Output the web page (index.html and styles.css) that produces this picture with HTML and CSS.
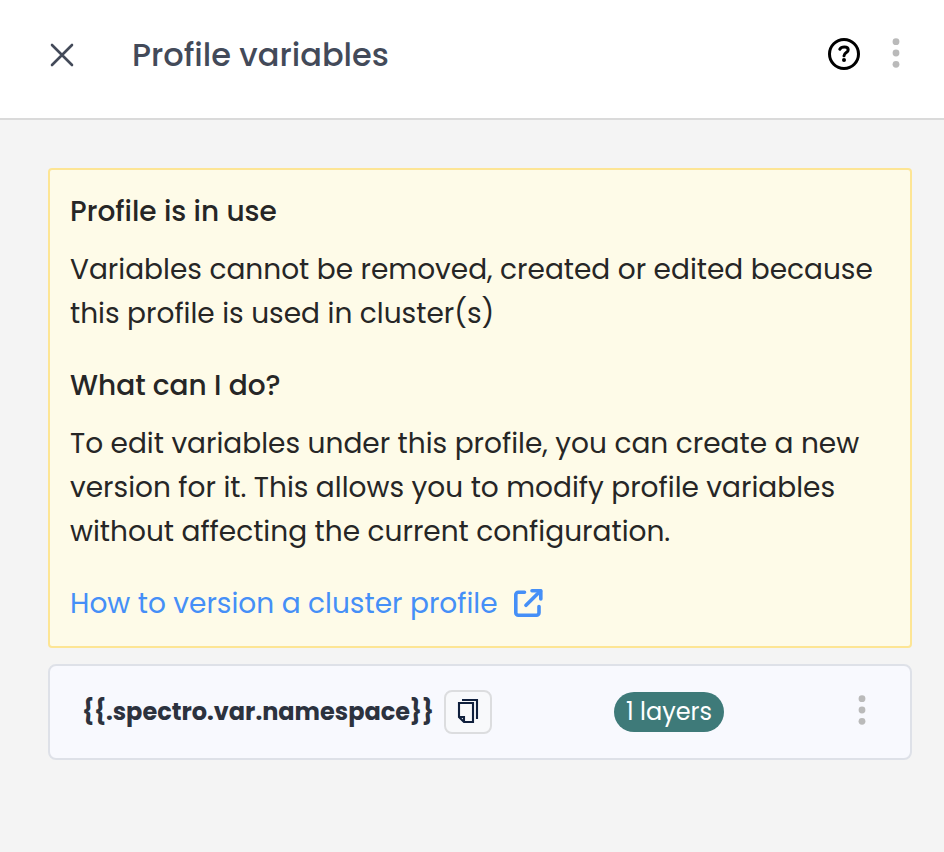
FILE: index.html
```html
<!DOCTYPE html>
<html lang="en">
<head>
<meta charset="utf-8">
<meta name="viewport" content="width=device-width, initial-scale=1">
<title>Profile variables</title>
<link rel="stylesheet" href="styles.css">
</head>
<body>
<header class="header">
  <button class="icon-button" type="button" aria-label="Close">
    <svg width="24" height="24" viewBox="0 0 24 24" fill="none" stroke="#434a59" stroke-width="2.6" stroke-linecap="round"><path d="M2 2l20 20M22 2L2 22"/></svg>
  </button>
  <h1 class="title">Profile variables</h1>
  <button class="icon-button help" type="button" aria-label="Help">
    <svg width="34" height="34" viewBox="0 1 34 34" fill="none" stroke="#000" stroke-width="3"><circle cx="17" cy="17" r="14.5"/><path d="M12.8 12.2C14.2 9.6 21 9 21.2 12.8C21.3 15.6 17.2 15.4 17 18.8" stroke-linecap="round"/><circle cx="17" cy="23" r="2" fill="#000" stroke="none"/></svg>
  </button>
  <button class="icon-button" type="button" aria-label="More actions">
    <svg width="8" height="34" viewBox="0 0 8 34" fill="#bababa"><circle cx="4" cy="3.7" r="3.4"/><circle cx="4" cy="15" r="3.4"/><circle cx="4" cy="26.3" r="3.4"/></svg>
  </button>
</header>
<main class="content">
  <section class="notice">
    <h2 class="notice-heading">Profile is in use</h2>
    <p class="notice-text">Variables cannot be removed, created or edited because this profile is used in cluster(s)</p>
    <h2 class="notice-heading">What can I do?</h2>
    <p class="notice-text">To edit variables under this profile, you can create a new version for it. This allows you to modify profile variables without affecting the current configuration.</p>
    <a class="notice-link" href="#versioning">How to version a cluster profile
      <svg width="30" height="30" viewBox="1 1 30 30" fill="none" stroke="#458ff7" stroke-width="3.6" stroke-linecap="round" stroke-linejoin="round"><path d="M11.500 4.200H5.300A2.500 2.500 0 0 0 2.800 6.700V24.700A2.500 2.500 0 0 0 5.300 27.200H23.500A2.500 2.500 0 0 0 26 24.700V18.500"/><path d="M13 17.300L27.400 2.900"/><path d="M19 2.800H27.800V11"/></svg>
    </a>
  </section>
  <section class="variable">
    <div class="variable-name">
      <span class="name">{{.spectro.var.namespace}}</span>
      <button class="copy" type="button" aria-label="Copy variable">
        <svg width="24" height="28" viewBox="0 1 24 28" fill="none" stroke="#10203d" stroke-width="2.1"><path d="M6 3H21V22"/><path d="M3 6H17V25H8L3 20Z"/><path d="M3 20H8V25"/></svg>
      </button>
    </div>
    <div class="variable-meta">
      <span class="badge">1 layers</span>
      <button class="icon-button" type="button" aria-label="Variable actions">
        <svg width="8" height="34" viewBox="0 0 8 34" fill="#bababa"><circle cx="4" cy="3.7" r="3.4"/><circle cx="4" cy="15" r="3.4"/><circle cx="4" cy="26.3" r="3.4"/></svg>
      </button>
    </div>
  </section>
</main>
</body>
</html>
```
FILE: styles.css
```css
* { box-sizing: border-box; }

body {
  margin: 0;
  background: #f4f4f4;
  color: #262626;
  font: 28px/44px Poppins, Inter, sans-serif;
}

button {
  padding: 0;
  border: 0;
  background: none;
  cursor: pointer;
}

svg { display: block; flex: none; }

.header {
  display: flex;
  align-items: center;
  gap: 18px;
  padding: 33px 32px 41px 46px;
  background: #fff;
  border-bottom: 2px solid #dadada;
}

.icon-button {
  display: flex;
  align-items: center;
  justify-content: center;
  flex: none;
  width: 32px;
  height: 44px;
}

.title {
  flex: 1;
  margin: 0 0 0 36px;
  color: #434a59;
  font-size: 32px;
  font-weight: 500;
}

.help { width: 36px; }

.content {
  display: flex;
  flex-direction: column;
  gap: 16px;
  padding: 48px 32px 48px 48px;
}

.notice {
  padding: 20px;
  background: #fefbe8;
  border: 2px solid #fde594;
  border-radius: 4px;
}

.notice-heading {
  margin: 0 0 14px;
  font-size: 28px;
  font-weight: 500;
}

.notice-text { margin: 0 0 28px; }

.notice-link {
  display: flex;
  align-items: center;
  gap: 16px;
  color: #458ff7;
  text-decoration: none;
}

.variable {
  display: grid;
  grid-template-columns: 2fr 1fr;
  column-gap: 4px;
  align-items: center;
  padding: 24px 32px;
  background: #f8f9fe;
  border: 2px solid #dee1e8;
  border-radius: 8px;
}

.variable-name {
  display: flex;
  align-items: center;
  gap: 10px;
}

.name {
  color: #2c323e;
  font-size: 24px;
  font-weight: 700;
}

.copy {
  display: flex;
  align-items: center;
  justify-content: center;
  width: 48px;
  height: 44px;
  background: #f8f9fb;
  border: 2px solid #dcdddf;
  border-radius: 8px;
}

.variable-meta {
  display: flex;
  align-items: center;
  justify-content: space-between;
}

.badge {
  padding: 0 12px;
  background: #3e7a79;
  border-radius: 20px;
  color: #fff;
  font-size: 24px;
  line-height: 40px;
}
```
